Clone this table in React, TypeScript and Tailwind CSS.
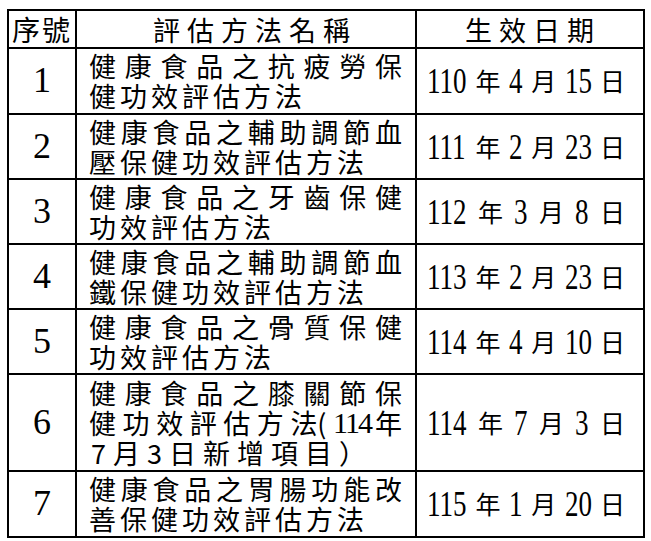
import React from "react";

type Row = {
  no: string;
  h: string;
  lines: { text: string[]; justify: boolean }[];
  date: string[]; // [year, month, day]
};

const split = (s: string) => Array.from(s);

const rows: Row[] = [
  {
    no: "1",
    h: "h-[66px]",
    lines: [
      { text: split("健康食品之抗疲勞保"), justify: true },
      { text: split("健功效評估方法"), justify: false },
    ],
    date: ["110", "4", "15"],
  },
  {
    no: "2",
    h: "h-[65px]",
    lines: [
      { text: split("健康食品之輔助調節血"), justify: true },
      { text: split("壓保健功效評估方法"), justify: false },
    ],
    date: ["111", "2", "23"],
  },
  {
    no: "3",
    h: "h-[65px]",
    lines: [
      { text: split("健康食品之牙齒保健"), justify: true },
      { text: split("功效評估方法"), justify: false },
    ],
    date: ["112", "3", "8"],
  },
  {
    no: "4",
    h: "h-[65px]",
    lines: [
      { text: split("健康食品之輔助調節血"), justify: true },
      { text: split("鐵保健功效評估方法"), justify: false },
    ],
    date: ["113", "2", "23"],
  },
  {
    no: "5",
    h: "h-[65px]",
    lines: [
      { text: split("健康食品之骨質保健"), justify: true },
      { text: split("功效評估方法"), justify: false },
    ],
    date: ["114", "4", "10"],
  },
  {
    no: "6",
    h: "h-[97px]",
    lines: [
      { text: split("健康食品之膝關節保"), justify: true },
      { text: [...split("健功效評估方"), "法(", "114年"], justify: true },
      { text: ["7", "月", "3", "日", "新", "增", "項", "目", "）"], justify: false },
    ],
    date: ["114", "7", "3"],
  },
  {
    no: "7",
    h: "h-[66px]",
    lines: [
      { text: split("健康食品之胃腸功能改"), justify: true },
      { text: split("善保健功效評估方法"), justify: false },
    ],
    date: ["115", "1", "20"],
  },
];

const cjk = "font-['Noto_Sans_CJK_TC','Noto_Sans_CJK_JP',sans-serif]";
const serif = "font-['Liberation_Serif',serif]";

// condensed serif digits, each digit 13.5px wide after scaling
const numWidth: Record<number, string> = {
  1: "w-[14px]",
  2: "w-[27px]",
  3: "w-[40px]",
};

function Num({ v }: { v: string }) {
  return (
    <span className={`inline-block overflow-visible ${numWidth[v.length]} h-[40px] leading-[40px]`}>
      <span className={`inline-block origin-left scale-x-[0.75] ${serif} text-[36px]`}>{v}</span>
    </span>
  );
}

function Token({ t }: { t: string }) {
  if (t === "114年") {
    return (
      <span className="flex items-center gap-[4px]">
        <span className={`${serif} text-[30px] tracking-[-2px]`}>114</span>
        <span>年</span>
      </span>
    );
  }
  return <span>{t}</span>;
}

export default function App() {
  return (
    <div className="w-[651px] h-[541px] bg-white text-black pt-[9px] pl-[7px]">
      <table className="table-fixed border-collapse w-[636px]">
        <colgroup>
          <col className="w-[68px]" />
          <col className="w-[340px]" />
          <col className="w-[228px]" />
        </colgroup>
        <thead>
          <tr className="h-[38px]">
            <th className={`border-2 border-black font-normal ${cjk} text-[28px] leading-none tracking-[2px] text-center`}>
              序號
            </th>
            <th className={`border-2 border-black font-normal ${cjk} text-[27px] leading-none tracking-[7px] pl-[18px] text-center`}>
              評估方法名稱
            </th>
            <th className={`border-2 border-black font-normal ${cjk} text-[27px] leading-none tracking-[7px] pl-[6px] text-center`}>
              生效日期
            </th>
          </tr>
        </thead>
        <tbody>
          {rows.map((r) => (
            <tr key={r.no} className={r.h}>
              <td className={`border-2 border-black text-center ${serif} text-[36px] leading-none pb-[2px]`}>
                {r.no}
              </td>
              <td className={`border-2 border-black p-0 pl-[12px] pr-[13px] ${cjk} text-[27px]`}>
                {r.lines.map((l, i) =>
                  l.justify ? (
                    <div key={i} className="flex justify-between items-center h-[30px] leading-[30px]">
                      {l.text.map((t, j) => (
                        <Token key={j} t={t} />
                      ))}
                    </div>
                  ) : (
                    <div
                      key={i}
                      className={`flex items-center h-[30px] leading-[30px] ${l.text[0] === "7" ? "gap-[7px] pl-[2px]" : "gap-[4px]"}`}
                    >
                      {l.text.map((t, j) => (
                        <span key={j}>{t}</span>
                      ))}
                    </div>
                  )
                )}
              </td>
              <td className="border-2 border-black p-0 pr-[8px]">
                <div className={`mx-auto w-[198px] flex justify-between items-center ${cjk} text-[25px]`}>
                  <Num v={r.date[0]} />
                  <span>年</span>
                  <Num v={r.date[1]} />
                  <span>月</span>
                  <Num v={r.date[2]} />
                  <span>日</span>
                </div>
              </td>
            </tr>
          ))}
        </tbody>
      </table>
    </div>
  );
}
